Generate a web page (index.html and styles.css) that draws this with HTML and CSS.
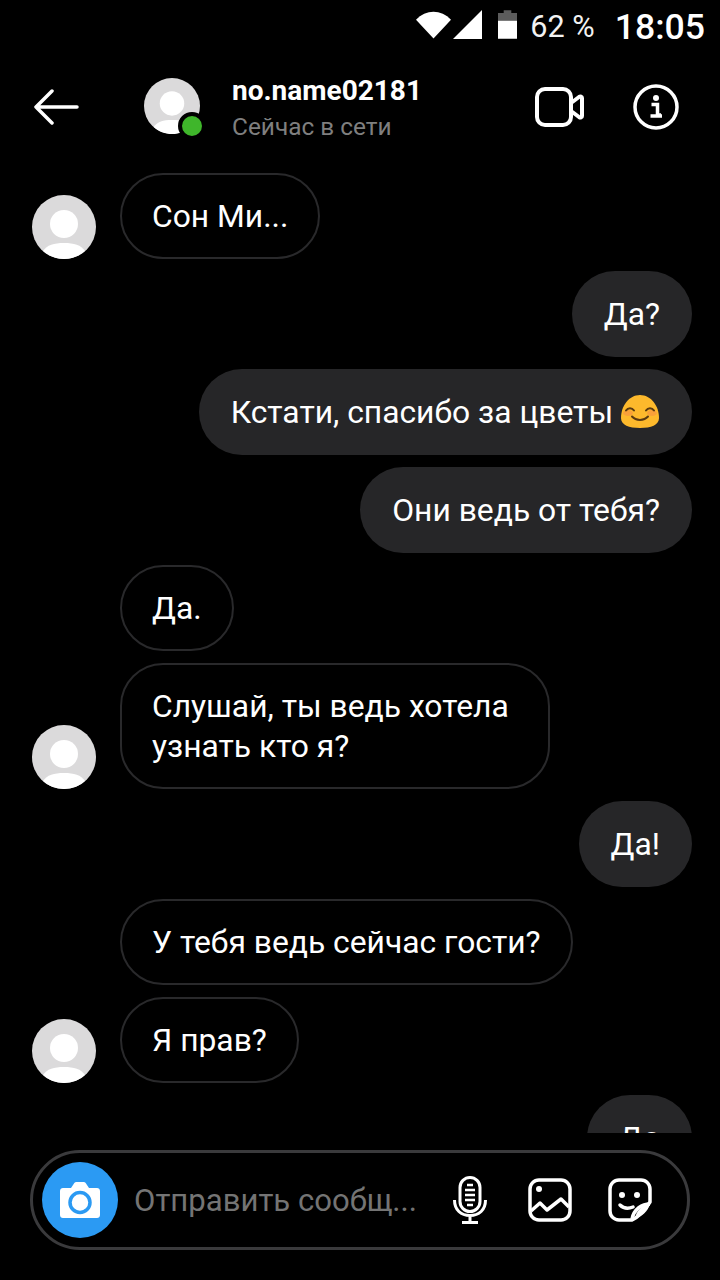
FILE: index.html
```html
<!DOCTYPE html>
<html lang="ru">
<head>
<meta charset="utf-8">
<title>no.name02181</title>
<link rel="stylesheet" href="styles.css">
</head>
<body>
<div class="screen">
  <div class="status">
    <svg class="st-wifi" viewBox="0 0 36 28"><path d="M0 8.500C10-2.500 26-2.500 36 8.500L18 28Z" fill="#fff"/></svg>
    <svg class="st-signal" viewBox="0 0 30 30"><path d="M30 0V30H0Z" fill="#fff"/></svg>
    <svg class="st-batt" viewBox="0 0 20 30"><path d="M6 0H14V3H20V11H0V3H6Z" fill="#5c5c5c"/><rect y="11" width="20" height="19" fill="#fff"/></svg>
    <span class="st-pct">62 %</span>
    <span class="st-time">18:05</span>
  </div>
  <header class="head">
    <svg class="back" viewBox="0 0 46 36"><path d="M44 18H3M19 2 3 18 19 34" fill="none" stroke="#fff" stroke-width="3.500" stroke-linecap="round" stroke-linejoin="round"/></svg>
    <div class="head-av">
      <svg class="av" viewBox="0 0 64 64"><use href="#person"/></svg>
      <span class="dot"></span>
    </div>
    <div class="who">
      <div class="name">no.name02181</div>
      <div class="seen">Сейчас в сети</div>
    </div>
    <svg class="video" viewBox="0 0 50 42"><rect x="2" y="3" width="34" height="36" rx="8" fill="none" stroke="#fff" stroke-width="4"/><path d="M36 17 44 11C45.500 10 47 10.500 47 12V30C47 31.500 45.500 32 44 31L36 25" fill="none" stroke="#fff" stroke-width="4" stroke-linejoin="round"/></svg>
    <svg class="info" viewBox="0 0 46 46"><circle cx="23" cy="23" r="21" fill="none" stroke="#fff" stroke-width="3.500"/><circle cx="23" cy="14" r="3" fill="#fff"/><path d="M18.500 20.500H24.500V31H28M17.500 32H29" fill="none" stroke="#fff" stroke-width="3.500"/></svg>
  </header>
  <main class="msgs">
    <div class="row in"><svg class="av" viewBox="0 0 64 64"><use href="#person"/></svg><div class="bub">Сон Ми...</div></div>
    <div class="row out"><div class="bub">Да?</div></div>
    <div class="row out"><div class="bub has-emoji">Кстати, спасибо за цветы <svg class="emoji" viewBox="0 0 38 33"><path d="M19 0C30 0 38 11 38 23C38 30 30 33 19 33C8 33 0 30 0 23C0 11 8 0 19 0Z" fill="#fdb92c"/><ellipse cx="7" cy="18" rx="5" ry="3" fill="#f9a03a"/><ellipse cx="31" cy="18" rx="5" ry="3" fill="#f9a03a"/><path d="M5 15.500C7 12.500 11 12.500 13 15.500M25 15.500C27 12.500 31 12.500 33 15.500M11 21.500C15 26 23 26 27 21.500" fill="none" stroke="#5b3a10" stroke-width="2" stroke-linecap="round"/></svg></div></div>
    <div class="row out"><div class="bub">Они ведь от тебя?</div></div>
    <div class="row in"><span class="gap"></span><div class="bub">Да.</div></div>
    <div class="row in"><svg class="av" viewBox="0 0 64 64"><use href="#person"/></svg><div class="bub wide">Слушай, ты ведь хотела<br>узнать кто я?</div></div>
    <div class="row out"><div class="bub">Да!</div></div>
    <div class="row in"><span class="gap"></span><div class="bub">У тебя ведь сейчас гости?</div></div>
    <div class="row in"><svg class="av" viewBox="0 0 64 64"><use href="#person"/></svg><div class="bub">Я прав?</div></div>
    <div class="row out"><div class="bub">Да</div></div>
  </main>
  <footer class="foot">
    <div class="composer">
      <span class="cam">
        <svg class="cam-i" viewBox="0 0 40 36"><path d="M3 6H11L14 1.500C14.500 0.500 15.500 0 16.500 0H23.500C24.500 0 25.500 0.500 26 1.500L29 6H37C38.700 6 40 7.300 40 9V33C40 34.700 38.700 36 37 36H3C1.300 36 0 34.700 0 33V9C0 7.300 1.300 6 3 6Z" fill="#fff"/><circle cx="20" cy="20.500" r="10" fill="none" stroke="#2b9af3" stroke-width="3.500"/></svg>
      </span>
      <span class="ph">Отправить сообщ...</span>
      <svg class="mic" viewBox="0 0 34 48"><rect x="7" y="1.500" width="20" height="34" rx="10" fill="none" stroke="#fff" stroke-width="3"/><path d="M1.500 24C1.500 34 8 39.500 17 39.500S32.500 34 32.500 24M17 39.500V46M9 46.500H25" fill="none" stroke="#fff" stroke-width="3"/><path d="M14 9H20M12 14H22M12 19H22M12 24H22M14 29H20" stroke="#fff" stroke-width="2.500"/></svg>
      <svg class="gal" viewBox="0 0 44 44"><rect x="2" y="2" width="40" height="40" rx="9" fill="none" stroke="#fff" stroke-width="3.500"/><circle cx="11" cy="11" r="3" fill="#fff"/><path d="M3 33 12 25 19 32 33 21 41 29" fill="none" stroke="#fff" stroke-width="3.500" stroke-linejoin="round"/></svg>
      <svg class="stk" viewBox="0 0 44 44"><path d="M24 42H11C6 42 2 38 2 33V11C2 6 6 2 11 2H33C38 2 42 6 42 11V24C37 32 32 38 24 42Z" fill="none" stroke="#fff" stroke-width="3.500" stroke-linejoin="round"/><path d="M42 26C34 26 26 31 24 41" fill="none" stroke="#fff" stroke-width="3.500"/><path d="M42 25C40 34 34 38 27 41C28 33 33 28 42 25Z" fill="#fff"/><circle cx="14" cy="17" r="3" fill="#fff"/><circle cx="29" cy="17" r="3" fill="#fff"/><path d="M12 27C15 30 20 31 25 29" fill="none" stroke="#fff" stroke-width="3.500" stroke-linecap="round"/></svg>
    </div>
  </footer>
</div>
<svg class="defs" width="0" height="0">
  <symbol id="person" viewBox="0 0 64 64">
    <circle cx="32" cy="32" r="32" fill="#dbdadb"/>
    <circle cx="32" cy="29" r="14" fill="#fff"/>
    <path d="M11 56C15 50 22 48 32 48S49 50 53 56C47.500 61 40 64 32 64S16.500 61 11 56Z" fill="#fff"/>
  </symbol>
</svg>
</body>
</html>
```
FILE: styles.css
```css
* { box-sizing: border-box; }
html, body { margin: 0; padding: 0; background: #000; }
body { font-family: Roboto, "Noto Sans", sans-serif; color: #fff; }
.defs { display: block; height: 0; }
.screen { width: 720px; height: 1280px; display: flex; flex-direction: column; overflow: hidden; background: #000; }

.status { height: 50px; flex: none; display: flex; align-items: center; justify-content: flex-end; padding: 3px 15px 0 0; }
.st-wifi { width: 35px; height: 28px; margin-top: -4px; }
.st-signal { width: 29px; height: 29px; margin: -4px 0 0 2px; }
.st-batt { width: 19px; height: 29px; margin: -4px 0 0 16px; }
.st-pct { font-size: 30.600px; margin-left: 13px; color: #f2f2f2; }
.st-time { font-size: 35.600px; font-weight: 500; margin-left: 20px; }

.head { height: 115px; flex: none; display: flex; align-items: center; padding: 0 41px 0 33px; margin-top: -1px; }
.back { width: 46px; height: 36px; flex: none; }
.head-av { position: relative; width: 56px; height: 56px; margin: -2px 0 0 65px; flex: none; }
.head-av .av { width: 56px; height: 56px; display: block; }
.dot { position: absolute; left: 34px; top: 34px; width: 28px; height: 28px; border-radius: 50%; background: #3fb62b; border: 4px solid #000; }
.who { margin-left: 32px; flex: 1; }
.name { font-size: 28px; font-weight: 700; line-height: 32px; margin-top: 4px; }
.seen { font-size: 24.400px; line-height: 30px; color: #7f7f7f; margin-top: 5px; }
.video { width: 50px; height: 42px; flex: none; }
.info { width: 46px; height: 46px; margin-left: 48px; flex: none; }

.msgs { flex: 1; min-height: 0; overflow: hidden; display: flex; flex-direction: column; gap: 12px; padding: 9px 28px 0 32px; }
.row { display: flex; align-items: flex-end; flex: none; }
.row.out { justify-content: flex-end; }
.row .av { width: 64px; height: 64px; flex: none; }
.gap { width: 64px; flex: none; }
.bub { font-size: 31.800px; line-height: 40px; padding: 23px 32px; border-radius: 43px; white-space: nowrap; }
.in .bub { margin-left: 24px; border: 2px solid #29292b; padding: 21px 30px; }
.in .wide { width: 430px; }
.out .bub { background: #262628; }
.out .has-emoji { padding-right: 33px; }
.emoji { width: 38px; height: 33px; vertical-align: -5px; }

.foot { height: 147px; flex: none; padding: 17px 30px 0; }
.composer { height: 100px; border: 3px solid #3a3a3c; border-radius: 50px; display: flex; align-items: center; padding: 0 35px 0 9px; }
.cam { width: 76px; height: 76px; border-radius: 50%; background: #2b9af3; display: flex; align-items: center; justify-content: center; flex: none; }
.cam-i { width: 40px; height: 36px; }
.ph { font-size: 31.100px; color: #747474; margin-left: 16px; flex: 1; white-space: nowrap; }
.mic { width: 34px; height: 48px; flex: none; }
.gal { width: 44px; height: 44px; margin-left: 41px; flex: none; }
.stk { width: 44px; height: 44px; margin-left: 36px; flex: none; }
```
